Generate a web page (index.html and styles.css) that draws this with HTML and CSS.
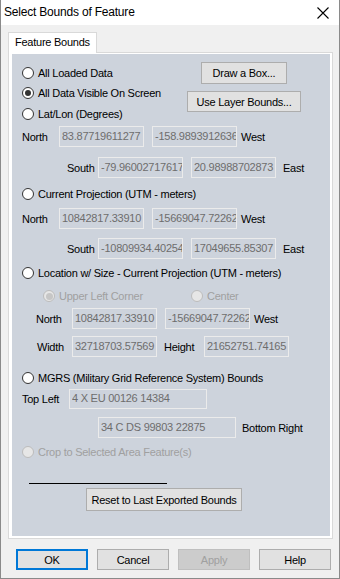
FILE: index.html
```html
<!DOCTYPE html>
<html>
<head>
<meta charset="utf-8">
<link rel="stylesheet" href="styles.css">
</head>
<body>
<div class="window">
  <div class="titlebar">
    <span class="title">Select Bounds of Feature</span>
    <svg class="close" width="12" height="12" viewBox="0 0 12 12"><path d="M0.5 0.5 L11.5 11.5 M11.5 0.5 L0.5 11.5" stroke="#000" stroke-width="1.1" fill="none"/></svg>
  </div>
  <div class="client">
    <div class="tabs"><div class="tab">Feature Bounds</div></div>
    <div class="frame">
      <div class="page">
        <div class="top">
          <div class="radios">
            <div class="rrow r1"><span class="radio"></span><span>All Loaded Data</span></div>
            <div class="rrow"><span class="radio checked"></span><span>All Data Visible On Screen</span></div>
            <div class="rrow r3"><span class="radio"></span><span>Lat/Lon (Degrees)</span></div>
          </div>
          <div class="topbtns">
            <div class="btn draw">Draw a Box...</div>
            <div class="btn layer">Use Layer Bounds...</div>
          </div>
        </div>

        <div class="row north1"><span class="lbl w37">North</span><input class="tb" readonly value="83.87719611277"><input class="tb ml8" readonly value="-158.9893912636"><span class="ml4">West</span></div>
        <div class="row south1"><span class="lbl w31">South</span><input class="tb" readonly value="-79.96002717617"><input class="tb ml8" readonly value="20.98988702873"><span class="ml7">East</span></div>

        <div class="rrow cur"><span class="radio"></span><span>Current Projection (UTM - meters)</span></div>
        <div class="row north2"><span class="lbl w37">North</span><input class="tb" readonly value="10842817.33910"><input class="tb ml8" readonly value="-15669047.72262"><span class="ml4">West</span></div>
        <div class="row south2"><span class="lbl w31">South</span><input class="tb" readonly value="-10809934.40254"><input class="tb ml8" readonly value="17049655.85307"><span class="ml7">East</span></div>

        <div class="rrow loc"><span class="radio"></span><span>Location w/ Size - Current Projection (UTM - meters)</span></div>
        <div class="rrow sub">
          <div class="subitem w148"><span class="radio dis checked"></span><span class="distext">Upper Left Corner</span></div>
          <div class="subitem"><span class="radio dis"></span><span class="distext">Center</span></div>
        </div>
        <div class="row north3"><span class="lbl w36">North</span><input class="tb" readonly value="10842817.33910"><input class="tb ml8" readonly value="-15669047.72262"><span class="ml4">West</span></div>
        <div class="row widthrow"><span class="lbl w35">Width</span><input class="tb" readonly value="32718703.57569"><span class="lbl w40 ml7">Height</span><input class="tb" readonly value="21652751.74165"></div>

        <div class="rrow mgrs"><span class="radio"></span><span>MGRS (Military Grid Reference System) Bounds</span></div>
        <div class="row topleft"><span class="lbl w47">Top Left</span><input class="tb wide" readonly value="4 X EU 00126 14384"></div>
        <div class="row botright"><input class="tb wide" readonly value="34 C DS 99803 22875"><span class="ml6">Bottom Right</span></div>

        <div class="rrow crop"><span class="radio dis"></span><span class="distext">Crop to Selected Area Feature(s)</span></div>

        <div class="rule"></div>
        <div class="btn reset">Reset to Last Exported Bounds</div>
      </div>
    </div>
    <div class="bottom">
      <div class="btn dlg ok">OK</div>
      <div class="btn dlg">Cancel</div>
      <div class="btn dlg disabled">Apply</div>
      <div class="btn dlg">Help</div>
    </div>
  </div>
</div>
</body>
</html>
```
FILE: styles.css
```css
* { box-sizing: border-box; }
html, body { margin: 0; padding: 0; }
body { width: 340px; height: 579px; overflow: hidden; background: #fff; }

.window {
  width: 340px;
  height: 579px;
  border: 1px solid #8a8a8a;
  border-top: 0;
  background: #f0f0f0;
  font-family: "Liberation Sans", Arial, sans-serif;
  font-size: 11px;
  letter-spacing: -0.25px;
  color: #000;
  display: flex;
  flex-direction: column;
}

.titlebar {
  height: 25px;
  background: #fff;
  display: flex;
  align-items: center;
  padding-left: 3px;
  padding-right: 10px;
}
.title {
  font-size: 12px;
  letter-spacing: -0.2px;
  flex: 1;
  padding-bottom: 1px;
}
.close { display: block; margin-top: 1px; }

.client { flex: 1; display: flex; flex-direction: column; }

.tabs {
  margin-top: 7px;
  padding-left: 7px;
  display: flex;
  height: 20px;
}
.tab {
  width: 89px;
  height: 21px;
  background: #fff;
  border: 1px solid #d9d9d9;
  border-bottom: 0;
  padding-left: 6px;
  line-height: 18px;
  position: relative;
  z-index: 1;
}

.frame {
  margin: 0 6px 0 7px;
  height: 487px;
  border: 1px solid #d9d9d9;
  background: #fff;
  padding: 1px 2px 2px 3px;
}
.page {
  height: 100%;
  background: #cdd3dc;
  display: flex;
  flex-direction: column;
}

.top { display: flex; margin-top: 8px; }
.radios { display: flex; flex-direction: column; padding-top: 1px; }
.topbtns {
  margin-left: auto;
  margin-right: 29px;
  width: 114px;
  display: flex;
  flex-direction: column;
  align-items: center;
}

.rrow {
  display: flex;
  align-items: center;
  height: 20px;
  padding-left: 10px;
  white-space: nowrap;
}
.r3 { margin-top: 1px; }

.radio {
  width: 12px;
  height: 12px;
  border: 1px solid #333;
  border-radius: 50%;
  background: #fff;
  margin-right: 4px;
  flex: none;
  display: flex;
  align-items: center;
  justify-content: center;
}
.radio.checked::after {
  content: "";
  width: 6px;
  height: 6px;
  border-radius: 50%;
  background: #333;
}
.radio.dis { border-color: #bcbcbc; background: #e6e6e6; }
.radio.dis.checked::after { background: #c6c6c6; width: 7px; height: 7px; }
.distext { color: #a0a0a0; }

.btn {
  background: #e1e1e1;
  border: 1px solid #adadad;
  display: flex;
  align-items: center;
  justify-content: center;
  white-space: nowrap;
}
.draw { width: 86px; height: 22px; }
.layer { width: 114px; height: 21px; margin-top: 7px; }

.row {
  display: flex;
  align-items: center;
  height: 21px;
  white-space: nowrap;
}
.lbl { flex: none; }

.tb {
  width: 85px;
  height: 21px;
  margin: 0;
  border: 1px solid #ebebeb;
  background: #cdd3dc;
  color: #6d6d6d;
  font-family: "Liberation Sans", Arial, sans-serif;
  font-size: 11px;
  letter-spacing: -0.25px;
  padding: 0 0 2px 2px;
  outline: none;
  flex: none;
}
.tb.wide { width: 138px; }

.w31 { width: 31px; }
.w35 { width: 35px; }
.w36 { width: 36px; }
.w37 { width: 37px; }
.w40 { width: 40px; }
.w47 { width: 47px; }
.w148 { width: 148px; }
.row .ml4 { margin-left: 4px; }
.row .ml6 { margin-left: 6px; }
.row .ml7 { margin-left: 7px; }
.row .ml8 { margin-left: 8px; }

.north1 { margin-top: 2px; padding-left: 10px; }
.south1 { margin-top: 10px; padding-left: 55px; }
.cur { margin-top: 6px; }
.north2 { margin-top: 4px; padding-left: 10px; }
.south2 { margin-top: 9px; padding-left: 55px; }
.loc { margin-top: 4px; }
.sub { margin-top: 3px; padding-left: 31px; }
.subitem { display: flex; align-items: center; }
.north3 { margin-top: 2px; padding-left: 24px; }
.widthrow { margin-top: 7px; padding-left: 25px; }
.mgrs { margin-top: 11px; }
.topleft { margin-top: 0; padding-left: 10px; }
.topleft .tb { height: 20px; }
.botright { margin-top: 8px; padding-left: 86px; }
.crop { margin-top: 4px; }

.rule {
  width: 138px;
  height: 1px;
  background: #000;
  margin-top: 21px;
  margin-left: 17px;
}
.reset {
  width: 156px;
  height: 23px;
  margin-top: 4px;
  margin-left: 74px;
}

.bottom {
  display: flex;
  gap: 9px;
  padding-left: 15px;
  margin-top: 10px;
}
.dlg { width: 72px; height: 21px; }
.ok { border: 2px solid #0078d7; }
.disabled { background: #cccccc; border-color: #bfbfbf; color: #a0a0a0; }
```
